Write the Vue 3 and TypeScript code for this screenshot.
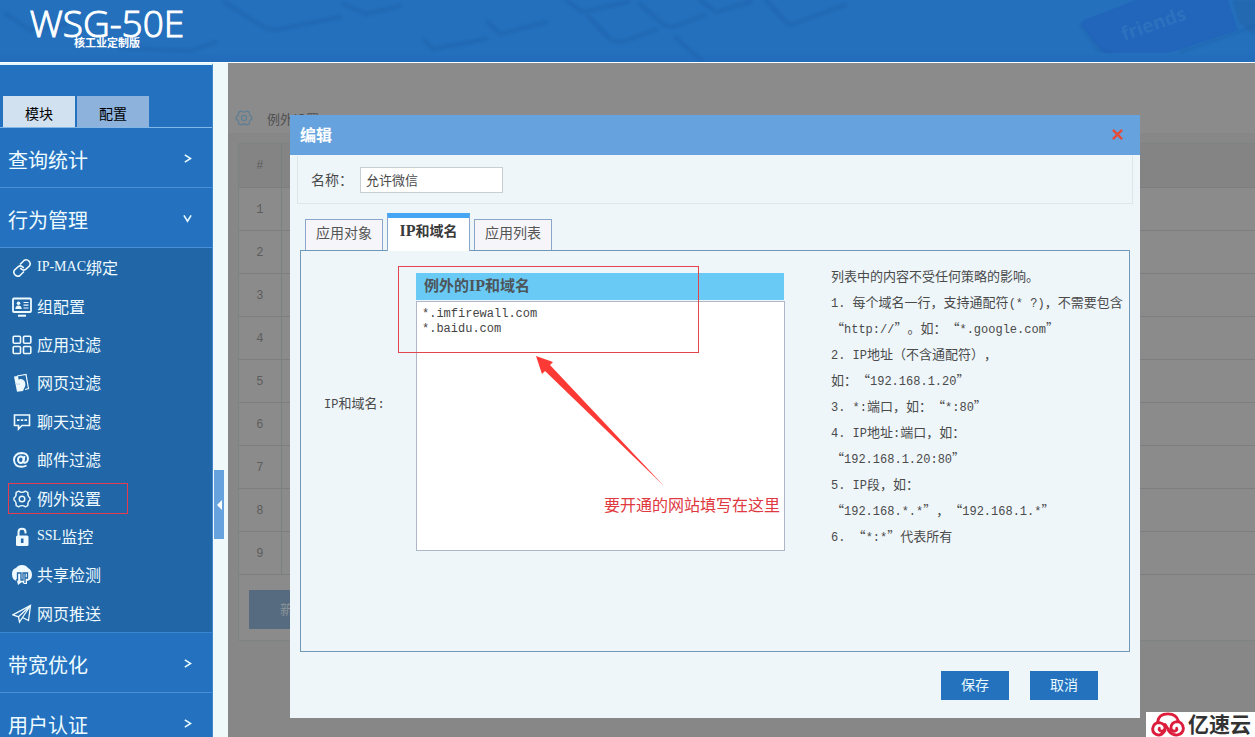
<script setup lang="ts">
import { ref } from 'vue'

interface Run { text: string; latin: boolean }
interface SubItem { label: string; icon: string; marked?: boolean }

const runs = (value: string): Run[] =>
  (value.match(/[\x20-\x7e]+|[^\x20-\x7e]+/g) ?? []).map((text) => ({
    text,
    latin: /^[\x20-\x7e]/.test(text),
  }))

const subItems: SubItem[] = [
  { label: 'IP-MAC绑定', icon: 'link' },
  { label: '组配置', icon: 'group' },
  { label: '应用过滤', icon: 'apps' },
  { label: '网页过滤', icon: 'web' },
  { label: '聊天过滤', icon: 'chat' },
  { label: '邮件过滤', icon: 'mail' },
  { label: '例外设置', icon: 'gear', marked: true },
  { label: 'SSL监控', icon: 'lock' },
  { label: '共享检测', icon: 'share' },
  { label: '网页推送', icon: 'push' },
]

const tabs = ['应用对象', 'IP和域名', '应用列表']
const activeTab = ref('IP和域名')
const name = ref('允许微信')
const domains = ref('*.imfirewall.com\n*.baidu.com')

const help = [
  '列表中的内容不受任何策略的影响。',
  '1. 每个域名一行，支持通配符(* ?)，不需要包含',
  '“http://”。如：“*.google.com”',
  '2. IP地址（不含通配符），',
  '如：“192.168.1.20”',
  '3. *:端口，如：“*:80”',
  '4. IP地址:端口，如：',
  '“192.168.1.20:80”',
  '5. IP段，如：',
  '“192.168.*.*”，“192.168.1.*”',
  '6. “*:*”代表所有',
]
</script>

<template>
  <div class="page">
    <header class="banner">
      <svg class="keys" viewBox="0 0 1255 62" preserveAspectRatio="xMidYMid slice" aria-hidden="true">
        <g class="key-edges" fill="none" stroke="#1d5fa6" stroke-width="5" stroke-linejoin="round" stroke-linecap="round">
          <path d="M224 2L262 26Q270 31 280 29L340 17" />
          <path d="M6 14L30 30L66 24M120 48L190 51L216 42" />
          <path d="M424 40L433 49L486 39" />
          <path d="M488 22L500 34L546 22" />
          <path d="M566 0L582 12L628 2" />
          <path d="M588 16L610 39Q616 43 624 41L656 30" />
          <path d="M640 4L664 25Q670 28 676 26L704 15" />
          <path d="M700 0L716 12L750 2" />
          <path d="M676 38L702 61" />
          <path d="M344 4L366 14L400 6" />
          <path d="M766 0L786 22Q789 26 796 23L845 5" />
        </g>
        <path class="key-edges" d="M1232 0H1255V36L1238 22Z" fill="#235f9f" />
        <path d="M1084 20L1136 0H1228L1238 30L1172 52Q1168 53 1164 53H1108Q1102 53 1099 48L1082 26Q1080 22 1084 20Z" fill="#2166bb" />
        <path class="key-edges" d="M1080 24L1098 50L1112 53M1180 52L1255 26" fill="none" stroke="#1d5fa8" stroke-width="3" />
        <path class="key-edges" d="M0 59H1255" stroke="#2368b8" stroke-width="5" />
        <text x="1124" y="41" transform="rotate(-19 1124 41)" class="key-word">friends</text>
      </svg>
      <div class="brand">
        <h1>WSG-50E</h1>
        <p>核工业定制版</p>
      </div>
    </header>

    <div class="body">
      <aside class="sidebar">
        <div class="side-tabs">
          <button type="button" class="side-tab current">模块</button>
          <button type="button" class="side-tab">配置</button>
        </div>
        <nav>
          <button type="button" class="group"><span>查询统计</span><svg viewBox="0 0 10 10"><path d="M2 1L8.500 5L2 9" /></svg></button>
          <button type="button" class="group"><span>行为管理</span><svg viewBox="0 0 10 10"><path d="M1 1.500L5 8L9 1.500" /></svg></button>
          <ul class="sub">
            <li v-for="item in subItems" :key="item.label">
              <a href="#" :class="{ marked: item.marked }">
                <svg class="icon" viewBox="0 0 20 20" fill="none" stroke="currentColor" stroke-width="1.6" aria-hidden="true">
                  <template v-if="item.icon === 'link'">
                    <path d="M8 6.500L12 2.500Q14.500 .800 17 3.200Q19.200 5.500 17.400 8L14 11.200Q11.800 13 9.500 11.200L8.200 10" />
                    <path d="M12 13.500L8 17.500Q5.500 19.200 3 16.800Q.800 14.500 2.600 12L6 8.800Q8.200 7 10.500 8.800L11.800 10" />
                  </template>
                  <template v-else-if="item.icon === 'group'">
                    <rect x="1" y="1.500" width="18" height="13.500" rx="1" stroke-width="1.800" />
                    <circle cx="6.500" cy="6.200" r="1.800" fill="currentColor" stroke="none" />
                    <path d="M3.300 12Q3.500 8.500 6.500 8.500T9.800 12Z" fill="currentColor" stroke="none" />
                    <path d="M11.500 5.500H16.500M11.500 8.200H16.500M11.500 11H16.500" stroke-width="1.200" />
                    <path d="M6 18.700H14" stroke-width="2" />
                  </template>
                  <template v-else-if="item.icon === 'apps'">
                    <rect x="1.200" y="1.200" width="7.300" height="7" rx="1" /><rect x="11.500" y="1.200" width="7.300" height="7" rx="1" />
                    <rect x="1.200" y="11.500" width="7.300" height="7" rx="1" /><rect x="11.500" y="11.500" width="7.300" height="7" rx="1" />
                  </template>
                  <template v-else-if="item.icon === 'web'">
                    <path d="M5 3L14 1.500L16.500 15.500L13 16.500" stroke-width="1.200" />
                    <path d="M2 3.500L6 3L6.500 6.500Q10 5 12.500 8Q14.500 12 12 15.500L11 18L5 18.800Z" fill="currentColor" stroke="none" />
                    <path d="M3 10Q5 12 8 11" stroke="#bfd4e6" stroke-width="1" />
                  </template>
                  <template v-else-if="item.icon === 'chat'">
                    <path d="M2.500 3H17.500V13.500H10L6.500 17V13.500H2.500Z" />
                    <path d="M5 8.200H7.500M8.800 8.200H11.200M12.500 8.200H15" stroke-width="1.800" />
                  </template>
                  <template v-else-if="item.icon === 'mail'">
                    <ellipse cx="8.800" cy="9.800" rx="2.800" ry="3.300" stroke-width="2" />
                    <path d="M12.500 6L11.500 11.200Q11.500 13.300 13.500 12.700Q16 11.500 16 8.200Q15.500 3 9.500 3Q2.500 3.300 2 10Q2.500 16.700 9.500 16.800Q12 16.800 14.500 15.500" stroke-width="1.900" />
                  </template>
                  <template v-else-if="item.icon === 'gear'">
                    <path d="M6.500 2.200Q10 4.500 13.500 2.200L15.800 3.500Q15.600 7.500 18 9V11Q15.600 12.500 15.800 16.500L13.500 17.800Q10 15.500 6.500 17.800L4.200 16.500Q4.400 12.500 2 11V9Q4.400 7.500 4.200 3.500Z" stroke-width="1.400" />
                    <circle cx="10" cy="10" r="2.800" stroke-width="1.400" />
                  </template>
                  <template v-else-if="item.icon === 'lock'">
                    <path d="M6.500 9V5Q6.500 1.700 10 1.700T13.500 5V6.500" stroke-width="2" />
                    <rect x="4" y="8.500" width="12.500" height="10.500" rx="1.500" fill="currentColor" stroke="none" />
                    <path d="M10.200 11.500V16" stroke="#2167a8" stroke-width="2.600" />
                  </template>
                  <template v-else-if="item.icon === 'share'">
                    <path d="M10 0Q14 0 16 3Q20 5 20 10Q20 15 15 16V19H12L10 17L6 20L5 16Q0 15 0 9Q0 4 4 3Q6 0 10 0Z" fill="currentColor" stroke="none" />
                    <path d="M4 15H5.500V8H9V15H11V8H13V18M13 8H15.500V13H13" stroke="#2167a8" stroke-width="1.300" />
                  </template>
                  <template v-else>
                    <path d="M.800 10.800L18.500 1.500L16.500 16.500L10.500 13.500L7.500 18L6.500 12.800Z" stroke-width="1.300" />
                    <path d="M18.500 1.500L6.500 12.800M18.500 1.500L10.500 13.500" stroke-width="1.300" />
                  </template>
                </svg>
                <span v-for="run in runs(item.label)" :key="run.text" :class="{ serif: run.latin }">{{ run.text }}</span>
              </a>
            </li>
          </ul>
          <button type="button" class="group"><span>带宽优化</span><svg viewBox="0 0 10 10"><path d="M2 1L8.500 5L2 9" /></svg></button>
          <button type="button" class="group"><span>用户认证</span><svg viewBox="0 0 10 10"><path d="M2 1L8.500 5L2 9" /></svg></button>
        </nav>
      </aside>

      <div class="gutter">
        <button type="button" class="collapse" aria-label="收起"></button>
      </div>

      <main class="content">
        <div class="crumb">
          <svg viewBox="0 0 20 20" fill="none" stroke="currentColor" stroke-width="1.4" aria-hidden="true">
            <path d="M6.500 2.200Q10 4.500 13.500 2.200L15.800 3.500Q15.600 7.500 18.700 9V11Q15.600 12.500 15.800 16.500L13.500 17.800Q10 15.500 6.500 17.800L4.200 16.500Q4.400 12.500 1.300 11V9Q4.400 7.500 4.200 3.500Z" />
            <circle cx="10" cy="10" r="2.800" />
          </svg>
          <span>例外设置</span>
        </div>
        <div class="list">
          <table>
            <thead><tr><th>#</th><th></th></tr></thead>
            <tbody><tr v-for="n in 9" :key="n"><td>{{ n }}</td><td></td></tr></tbody>
          </table>
          <div class="list-foot"><button type="button" class="add">新增</button></div>
        </div>

        <div class="overlay">
          <section class="dialog" role="dialog" aria-labelledby="dialog-title">
            <div class="dialog-head">
              <h2 id="dialog-title">编辑</h2>
              <button type="button" class="close" aria-label="关闭">
                <svg viewBox="0 0 12 12"><path d="M1 1L11 11M11 1L1 11" /></svg>
              </button>
            </div>
            <div class="name-row">
              <label for="rule-name">名称：</label>
              <input id="rule-name" v-model="name" type="text">
            </div>
            <div class="tabs" role="tablist">
              <button
                v-for="tab in tabs" :key="tab" type="button" role="tab" class="tab"
                :class="{ active: tab === activeTab }" :aria-selected="tab === activeTab" @click="activeTab = tab"
              ><span v-for="run in runs(tab)" :key="run.text" :class="{ serif: run.latin }">{{ run.text }}</span></button>
            </div>
            <div class="panel">
              <label class="field-label" for="domains"><span v-for="run in runs('IP和域名:')" :key="run.text" :class="{ mono: run.latin }">{{ run.text }}</span></label>
              <div class="field">
                <div class="field-head"><span v-for="run in runs('例外的IP和域名')" :key="run.text" :class="{ serif: run.latin }">{{ run.text }}</span></div>
                <textarea id="domains" v-model="domains" spellcheck="false"></textarea>
                <div class="note-box"></div>
                <svg class="arrow" viewBox="0 0 128 131" aria-hidden="true">
                  <path d="M0 0L17 6L14 9L128 130L9 15L6 18Z" fill="#fb3a36" />
                </svg>
                <p class="note">要开通的网站填写在这里</p>
              </div>
              <div class="help">
                <p v-for="line in help" :key="line"><span v-for="(run, i) in runs(line)" :key="i" :class="{ mono: run.latin }">{{ run.text }}</span></p>
              </div>
            </div>
            <div class="actions">
              <button type="button">保存</button>
              <button type="button">取消</button>
            </div>
          </section>
        </div>
      </main>
    </div>

    <div class="watermark">
      <svg viewBox="0 0 36 26" fill="none" stroke="#dc1d3c" stroke-width="3" stroke-linecap="round" aria-hidden="true">
        <path d="M7 11Q8 2 18 2Q27 2 29 10" />
        <path d="M15 19Q12 24 8 24Q2 23 2 17.500Q3 11 9 11Q15 12 15 17Q14 20 11 20Q8 19 9 17" />
        <path d="M15 13Q18 17 19 20Q22 24 27 24Q34 23 34 17Q33 10 27 10Q21 11 21 17Q22 20 25 20Q28 19 27 17" />
      </svg>
      <span>亿速云</span>
    </div>
  </div>
</template>

<style>
html,
body {
  margin: 0;
  height: 100%;
}
#app {
  height: 100%;
}
</style>

<style scoped>
* {
  box-sizing: border-box;
}
.page {
  position: relative;
  display: flex;
  flex-direction: column;
  height: 100vh;
  overflow: hidden;
  background: #fff;
  color: #4a4a4a;
  font: 13px/20px "Noto Sans CJK SC", sans-serif;
  text-spacing-trim: space-all;
}
button,
input,
textarea {
  margin: 0;
  border: 0;
  border-radius: 0;
  padding: 0;
  font: inherit;
  color: inherit;
}
h1,
h2,
p,
ul {
  margin: 0;
  padding: 0;
  list-style: none;
}
.mono {
  font-family: "Liberation Mono", monospace;
  font-size: 12px;
  white-space: pre;
}
.serif {
  font-family: "Liberation Serif", serif;
  font-size: 14px;
}

.banner {
  position: relative;
  flex: none;
  height: 62px;
  background: #2470bd;
  color: #fff;
}
.keys {
  position: absolute;
  inset: 0;
  width: 100%;
  height: 100%;
}
.key-edges {
  opacity: .38;
  filter: blur(1px);
}
.key-word {
  font: bold 19px "Open Sans", sans-serif;
  fill: #3577c0;
  opacity: .6;
}
.brand {
  position: relative;
  display: flex;
  flex-direction: column;
  align-items: center;
  width: 214px;
}
.brand h1 {
  font: 300 37px/46px "Open Sans", sans-serif;
  -webkit-text-stroke: 1px #fff;
}
.brand p {
  margin-top: -12px;
  font-size: 11px;
  font-weight: bold;
  line-height: 16px;
}

.body {
  display: flex;
  flex: 1;
  min-height: 0;
  padding-top: 1px;
}
.sidebar {
  flex: none;
  width: 213px;
  overflow: hidden;
  border-top: 2px solid #e4f8ff;
  border-right: 1px solid #3f86cd;
  background: #2472bf;
}
.side-tabs {
  display: flex;
  align-items: flex-end;
  gap: 2px;
  height: 63px;
  padding-left: 3px;
  border-bottom: 1px solid #82b7e8;
}
.side-tab {
  width: 72px;
  height: 31px;
  padding-top: 2px;
  background: #8db3dc;
  color: #000;
  font-size: 14px;
}
.side-tab.current {
  background: #d2e1f0;
}
.group {
  display: flex;
  align-items: center;
  justify-content: space-between;
  width: 100%;
  height: 60px;
  padding: 4px 20px 0 8px;
  border-bottom: 1px solid #4a90d8;
  background: #2472bf;
  color: #eefbff;
  font-size: 20px;
}
.group svg {
  width: 9px;
  height: 9px;
  margin-bottom: 2px;
  fill: none;
  stroke: #e8fbff;
  stroke-width: 1.8;
}
.sub {
  display: grid;
  grid-auto-rows: 1fr;
  height: 385px;
  border-bottom: 1px solid #3c85cf;
  background: #2167a8;
}
.sub li {
  display: flex;
  align-items: center;
  padding: 2px 0 0 8px;
}
.sub a {
  display: flex;
  align-items: center;
  width: 120px;
  height: 31px;
  border: 1px solid transparent;
  padding: 0 0 2px 3px;
  color: #eefaff;
  font-size: 16px;
  text-decoration: none;
}
.sub a.marked {
  border-color: #e63c50;
}
.icon {
  flex: none;
  width: 20px;
  height: 20px;
  margin: 2px 5px 0 0;
}
.gutter {
  display: flex;
  flex: none;
  flex-direction: column;
  width: 15px;
  padding: 407px 0 0 1px;
  background: #f0f9f9;
}
.collapse {
  display: flex;
  align-items: center;
  justify-content: flex-end;
  width: 10px;
  height: 69px;
  background: #66a3de;
}
.collapse::before {
  border: 5px solid transparent;
  border-right-color: #fff;
  border-left: 0;
  margin-right: 2px;
  content: "";
}

.content {
  position: relative;
  flex: 1;
  min-width: 0;
  overflow: hidden;
  background: #878787;
}
.crumb {
  display: flex;
  align-items: flex-end;
  gap: 14px;
  height: 70px;
  padding: 0 0 4px 7px;
  background: #8b8b8b;
  color: #505050;
  font-size: 13px;
}
.crumb svg {
  width: 18px;
  height: 18px;
  margin-bottom: 2px;
  color: #5f7f95;
}
.list {
  margin: 10px 0 0 10px;
  border: 1px solid #7e8384;
  border-right: 0;
  background: #8b8b8b;
}
table {
  width: 100%;
  border-collapse: collapse;
  table-layout: fixed;
}
th,
td {
  height: 43px;
  padding: 2px 0 0;
  border-bottom: 1px solid #7c7f80;
  color: #5d5d5d;
  font: 12px "Liberation Mono", monospace;
  text-align: center;
}
th {
  background: #848484;
}
th:first-child,
td:first-child {
  width: 42px;
  border-right: 1px solid #7b8080;
}
.list-foot {
  padding: 15px 10px 11px;
}
.add {
  width: 88px;
  height: 39px;
  background: #566b80;
  color: #8b9499;
}

.overlay {
  position: absolute;
  inset: 0;
  padding: 52px 115px 19px 62px;
}
.dialog {
  display: flex;
  flex-direction: column;
  height: 603px;
  background: #eef6fa;
}
.dialog-head {
  display: flex;
  flex: none;
  align-items: center;
  justify-content: space-between;
  height: 40px;
  padding: 0 17px 2px 10px;
  background: #66a3de;
  color: #fff;
}
.dialog-head h2 {
  font-size: 16px;
  line-height: 24px;
}
.close {
  display: flex;
  background: none;
}
.close svg {
  width: 11px;
  height: 11px;
  fill: none;
  stroke: #e64a38;
  stroke-width: 2.6;
}
.name-row {
  display: flex;
  flex: none;
  align-items: center;
  height: 48px;
  margin: 1px 7px 0;
  padding: 1px 13px 0;
  border: 1px solid #dde6ea;
  border-top: 0;
}
.name-row label {
  width: 49px;
  padding-bottom: 2px;
  font-size: 14px;
}
.name-row input {
  width: 143px;
  height: 26px;
  border: 1px solid #c9ced2;
  padding: 0 5px 2px;
  background: #fff;
}
.tabs {
  display: flex;
  flex: none;
  align-items: flex-end;
  gap: 4px;
  height: 46px;
  padding-left: 15px;
}
.tab {
  min-width: 78px;
  height: 31px;
  border: 1px solid #8ba6cb;
  border-bottom: 0;
  padding-bottom: 6px;
  background: #f6f6fa;
  color: #555;
  font-size: 14px;
}
.tab.active {
  position: relative;
  min-width: 83px;
  height: 38px;
  margin-bottom: -1px;
  border-top: 5px solid #45a7f3;
  padding-bottom: 8px;
  background: #fff;
  color: #3a3a3a;
  font-weight: bold;
}
.tab .serif {
  font-size: 16px;
}
.panel {
  display: flex;
  flex: 1;
  min-height: 0;
  margin: 0 10px;
  border: 1px solid #7099b9;
  padding: 12px 8px 20px 23px;
}
.field-label {
  flex: none;
  width: 92px;
  padding-top: 130px;
}
.field {
  position: relative;
  flex: 1;
  padding-top: 10px;
}
.field-head {
  height: 27px;
  margin-right: 1px;
  padding: 2px 8px;
  background: #69caf6;
  color: #4d555a;
  font-size: 15px;
  font-weight: bold;
}
.field-head .serif {
  font-size: 16px;
}
textarea {
  display: block;
  width: 100%;
  height: 250px;
  margin-top: 1px;
  border: 1px solid #aeb6c8;
  padding: 5px;
  background: #fff;
  color: #444;
  font: 12px/15px "Liberation Mono", monospace;
  resize: none;
}
.note-box {
  position: absolute;
  top: 3px;
  left: -18px;
  width: 301px;
  height: 87px;
  border: 1px solid #e2454d;
}
.arrow {
  position: absolute;
  top: 93px;
  left: 120px;
  width: 128px;
  height: 131px;
}
.note {
  position: absolute;
  top: 229px;
  right: 5px;
  color: #e0393f;
  font-size: 16px;
  line-height: 24px;
  white-space: nowrap;
}
.help {
  flex: none;
  width: 290px;
  margin-left: 46px;
}
.help p {
  height: 26px;
  line-height: 26px;
  white-space: nowrap;
}
.actions {
  display: flex;
  flex: none;
  justify-content: flex-end;
  gap: 21px;
  padding: 19px 42px 18px;
}
.actions button {
  width: 68px;
  height: 29px;
  padding-bottom: 3px;
  background: #2472bd;
  color: #e8faff;
  font-size: 14px;
}

.watermark {
  position: absolute;
  right: 0;
  bottom: 0;
  display: flex;
  align-items: center;
  gap: 2px;
  height: 25px;
  padding: 0 4px;
  background: #fff;
  color: #333;
  font-size: 21px;
  font-weight: bold;
  line-height: 25px;
}
.watermark span {
  height: 25px;
  margin-top: -2px;
}
.watermark svg {
  width: 36px;
  height: 25px;
}
</style>
